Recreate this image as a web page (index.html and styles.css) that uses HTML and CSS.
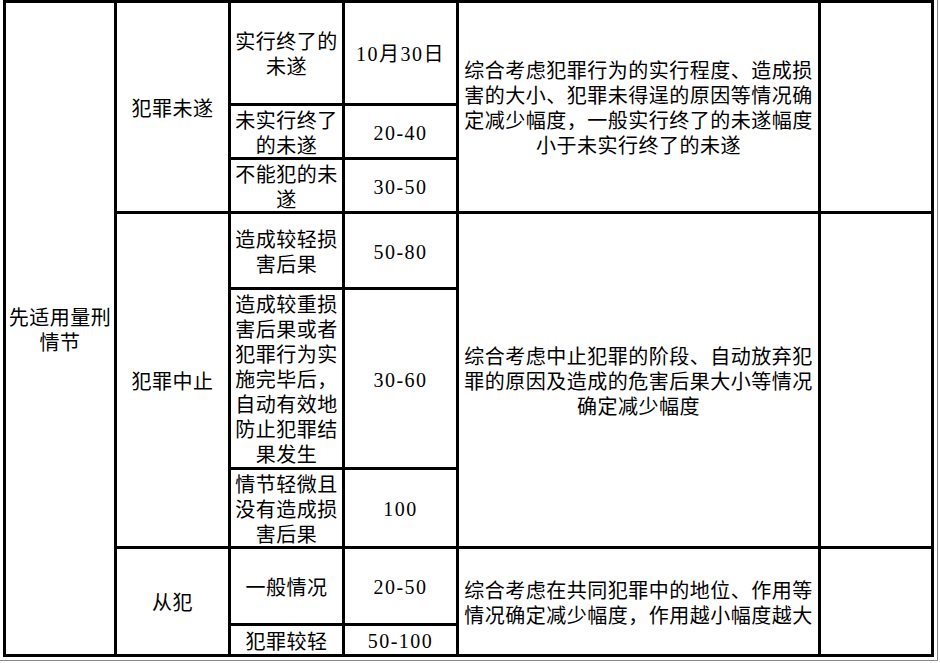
FILE: index.html
```html
<!DOCTYPE html>
<html lang="zh-CN">
<head>
<meta charset="utf-8">
<title>量刑情节</title>
<link rel="stylesheet" href="styles.css">
</head>
<body>
<div class="frame">
<table class="grid">
<colgroup>
<col class="c1"><col class="c2"><col class="c3"><col class="c4"><col class="c5"><col class="c6">
</colgroup>
<tbody>
<tr class="r1">
<td rowspan="8">先适用量刑情节</td>
<td rowspan="3">犯罪未遂</td>
<td>实行终了的未遂</td>
<td class="num">10月30日</td>
<td rowspan="3">综合考虑犯罪行为的实行程度、造成损害的大小、犯罪未得逞的原因等情况确定减少幅度，一般实行终了的未遂幅度小于未实行终了的未遂</td>
<td rowspan="3"></td>
</tr>
<tr class="r2">
<td>未实行终了的未遂</td>
<td class="num">20-40</td>
</tr>
<tr class="r3">
<td>不能犯的未遂</td>
<td class="num">30-50</td>
</tr>
<tr class="r4">
<td rowspan="3">犯罪中止</td>
<td>造成较轻损害后果</td>
<td class="num">50-80</td>
<td rowspan="3">综合考虑中止犯罪的阶段、自动放弃犯罪的原因及造成的危害后果大小等情况确定减少幅度</td>
<td rowspan="3"></td>
</tr>
<tr class="r5">
<td>造成较重损害后果或者犯罪行为实施完毕后，自动有效地防止犯罪结果发生</td>
<td class="num">30-60</td>
</tr>
<tr class="r6">
<td>情节轻微且没有造成损害后果</td>
<td class="num">100</td>
</tr>
<tr class="r7">
<td rowspan="2">从犯</td>
<td>一般情况</td>
<td class="num">20-50</td>
<td rowspan="2">综合考虑在共同犯罪中的地位、作用等情况确定减少幅度，作用越小幅度越大</td>
<td rowspan="2"></td>
</tr>
<tr class="r8">
<td>犯罪较轻</td>
<td class="num">50-100</td>
</tr>
</tbody>
</table>
</div>
</body>
</html>
```

FILE: styles.css
```css
html, body {
  margin: 0;
  padding: 0;
  background: #ffffff;
}

.frame {
  width: 938px;
  height: 661px;
  box-sizing: border-box;
  border-right: 1px solid #8a8a8a;
  border-bottom: 1px solid #8a8a8a;
  padding: 0 0 0 3px;
  overflow: hidden;
}

.grid {
  border-collapse: collapse;
  table-layout: fixed;
  width: 931px;
  font-family: "Noto Sans CJK SC", "Liberation Sans", sans-serif;
  font-size: 20px;
  line-height: 25px;
  letter-spacing: 0.5px;
  color: #000000;
}

.grid td {
  border: 3px solid #000000;
  padding: 0 1px;
  text-align: center;
  vertical-align: middle;
  overflow: hidden;
}

.c1 { width: 111px; }
.c2 { width: 114px; }
.c3 { width: 114px; }
.c4 { width: 114px; }
.c5 { width: 362px; }
.c6 { width: 113px; }

.r1 { height: 103px; }
.r2 { height: 54px; }
.r3 { height: 54px; }
.r4 { height: 76px; }
.r5 { height: 180px; }
.r6 { height: 79px; }
.r7 { height: 77px; }
.r8 { height: 31px; }

.grid td.num {
  font-family: "Liberation Serif", "Noto Sans CJK SC", serif;
  letter-spacing: 1.5px;
  padding-top: 3px;
}
```
